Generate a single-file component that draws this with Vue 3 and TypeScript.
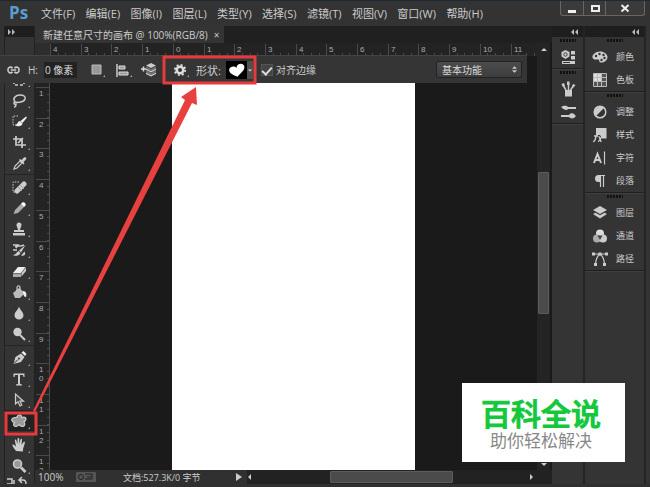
<script setup lang="ts">
import { ref } from 'vue'

interface Item { name: string; icon: string }

const menus: string[] = ['文件(F)', '编辑(E)', '图像(I)', '图层(L)', '类型(Y)', '选择(S)', '滤镜(T)', '视图(V)', '窗口(W)', '帮助(H)']

const height = ref('0 像素')
const snapEdges = ref(true)
const workspace = ref('基本功能')
const activeTool = ref('自定形状工具')

const toolGroups: Item[][] = [
  [
    { name: '选框工具', icon: '<path d="M3 5h10v9H3z" fill="none" stroke="currentColor" stroke-width="1.6" stroke-dasharray="3 2"/>' },
    { name: '套索工具', icon: '<path d="M4 10C1 6 5 3 9 3c4 0 6 2 5 4-1 3-7 4-10 3 -2 1-1 3 1 2 0 2-1 3-2 3" fill="none" stroke="currentColor" stroke-width="1.5"/>' },
    { name: '快速选择工具', icon: '<path d="M7 3H2v9h5" fill="none" stroke="currentColor" stroke-width="1" stroke-dasharray="1.5 1.2"/><path d="M15 3.500 9.500 8l2 2L16 4.500zM9 8c-2.500 0-2 3.500-5 4 3 2.500 7.500 1 7.500-1.500z" fill="#eee"/>' },
    { name: '裁剪工具', icon: '<path d="M5 2v9h10M2 5h9v9M7 9l5-5" fill="none" stroke="currentColor" stroke-width="1.7"/>' },
    { name: '吸管工具', icon: '<path d="M3 14l1-3 5-5 2 2-5 5z" fill="none" stroke="currentColor" stroke-width="1.2"/><path d="M8 5l1-1 1.500 1L13 2.500c2-1 3 1 2 2L12.500 7l1 1.500-1 1z" fill="currentColor"/>' },
  ],
  [
    { name: '修复画笔工具', icon: '<path d="M8 3H2v10h4" fill="none" stroke="currentColor" stroke-width="1" stroke-dasharray="1.500 1.200"/><path d="M6 12l7-7" stroke="currentColor" stroke-width="5" stroke-linecap="round"/><path d="M7 8l4 4M9 6l4 4" stroke="#999" stroke-width="1"/>' },
    { name: '画笔工具', icon: '<path d="M2.500 14l1.500-4 6-6 3 3-6 6z" fill="#aaa"/><path d="M10 4c1-2 3-2 4-1s1 3-1 4z" fill="#fff"/>' },
    { name: '仿制图章工具', icon: '<path d="M2 12h12v2.500H2zM3 9h4C7 7 5.500 6 5.500 4a2.500 2.500 0 0 1 5 0c0 2-1.500 3-1.500 5h4v2H3z" fill="currentColor"/>' },
    { name: '历史记录画笔工具', icon: '<path d="M2 3h5l-2 3M4 5c3-2 5 0 9-2M2 8h4" fill="none" stroke="currentColor" stroke-width="1.400"/><path d="M14.500 3 8 8.500l2 2zM7.500 9c-2 1-2 3.500-5.500 4 3 2 7 0 7.500-2zM10 13.500c4 1 5-1.500 3.500-4z" fill="currentColor"/>' },
    { name: '橡皮擦工具', icon: '<path d="M2 10l5-6h7.500l-4.500 6z" fill="#eee"/><path d="M2 10.500h8V14H2z" fill="#aaa"/><path d="M10.500 10 15 4.500V8l-4.500 5.500z" fill="#ccc"/>' },
    { name: '油漆桶工具', icon: '<path d="M2 9l6-5 6 5-5 5H4z" fill="#bbb"/><path d="M6 8V4c0-3 3-3 3 0v3" fill="none" stroke="currentColor" stroke-width="1.200"/><path d="M12 7c3 0 4 3 3 6-2 0-3-2-3-6z" fill="#eee"/>' },
    { name: '模糊工具', icon: '<path d="M8 1.500C7 5 3.500 7 3.500 10.500a4.500 4 0 0 0 9 0C12.500 7 9 5 8 1.500z" fill="currentColor"/>' },
    { name: '减淡工具', icon: '<circle cx="6.500" cy="6" r="4.200" fill="currentColor"/><path d="M9 9l5 5" stroke="currentColor" stroke-width="2"/>' },
  ],
  [
    { name: '钢笔工具', icon: '<path d="M2.500 14 4.500 7 10 3.500l3.500 3.500L10 12z" fill="currentColor"/><path d="M10.500 2.500l2-1.500L15.500 4 14 6z" fill="#eee"/><path d="M3 13.500l4-4" stroke="#333" stroke-width="1"/><circle cx="8" cy="8.500" r="1" fill="#333"/>' },
    { name: '横排文字工具', icon: '<path d="M2.500 2.500h11v3.500h-1l-.5-2H9v9l2 .5v1H5v-1l2-.5v-9H4L3.500 6h-1z" fill="currentColor"/>' },
    { name: '路径选择工具', icon: '<path d="M4.500 2v10l2.500-2.200L9 14l1.800-1L9 9.200h3.500z" fill="#444" stroke="currentColor" stroke-width="1.200"/>' },
    { name: '自定形状工具', icon: '<path d="M6 4C7 1 11 1 10.500 4.500c3-1 4.500 0 4.500 1.500 0 1.500-1.500 2.500-2 3 1.500 2 .5 4.500-1.500 4.500S8.500 12 8 11.500c-1 1.500-3 2.500-4.500 1.500S2.500 10.500 3.500 9.500C.5 9 0 6 2 5s3 0 4-1z" fill="#999" stroke="currentColor" stroke-width="1.200"/>' },
  ],
  [
    { name: '抓手工具', icon: '<path d="M5 14C3 11 1 9 1.500 7.500 3 7 4 9 5 9.500L3.800 3.500C4 2 5.300 2.500 5.500 4L6.500 7V2c.5-1.500 1.800-1 1.800 0v5L9.500 2.500c.5-1.200 1.800-.7 1.500.5L10.500 8 12.500 5c1-.8 2 0 1.300 1.200L12 12v2.500z" fill="currentColor"/>' },
    { name: '缩放工具', icon: '<circle cx="6.500" cy="6" r="4" fill="#999" stroke="currentColor" stroke-width="1.600"/><path d="M10 9.500l4.500 4.500" stroke="currentColor" stroke-width="2.600"/>' },
  ],
]

const iconDock: Item[][] = [
  [{ name: '历史记录', icon: '<path d="M5.500 1l4 2v4.500l-4 2.500-4-2.500V3z" fill="currentColor"/><circle cx="5.500" cy="5.500" r="1.700" fill="none" stroke="#444"/><path d="M11 2h4v3.500h-4zM11 7h4v3.500h-4zM2 12h13v3H2z" fill="currentColor"/><path d="M3 13.500h7" stroke="#333"/>' }],
  [
    { name: '画笔预设', icon: '<path d="M5 9h7v6.500H5z" fill="currentColor"/><path d="M6 9 3 4M8.500 9V2M10.500 9 14 4" stroke="currentColor" stroke-width="1.500"/><path d="M1.500 3 4 2l1 3-2 1zM7 .500h2.500V4H7zM13 3l2.500 1-2 2.500-1.500-1z" fill="currentColor"/>' },
    { name: '画笔', icon: '<path d="M1 3c3-2 6-1.500 7 0h8v2H8C7 7 4 6 1 3zM1 11h8c1-2 4-2.500 5.500-.5L16 12l-1.500 1.500C13 15 10 14.500 9 13H1z" fill="currentColor"/>' },
  ],
]

const panelDock: Item[][] = [
  [
    { name: '颜色', icon: '<path d="M8 2.500c4 0 7.500 2.500 7.500 5.500s-3 6-7 5.500c-2-.3-.5-2.500-2-3S1 11.500.500 8.500 4 2.500 8 2.500z" fill="currentColor"/><g fill="#333"><circle cx="4" cy="7" r="1.200"/><circle cx="7.500" cy="5" r="1.200"/><circle cx="11.500" cy="6" r="1.200"/><circle cx="12.500" cy="9" r="1.200"/><circle cx="9.500" cy="11" r="1.200"/></g>' },
    { name: '色板', icon: '<path d="M1.500 1.500h13v13h-13z" fill="#555"/><path d="M1.500 1.500h8v8h-8z" fill="#ddd"/><path d="M1.500 1.500h13v13h-13zM5.500 1.500v13M9.500 1.500v13M1.500 5.500h13M1.500 9.500h13" fill="none" stroke="#bbb"/>' },
  ],
  [
    { name: '调整', icon: '<circle cx="8" cy="8" r="5.800" fill="#333" stroke="currentColor" stroke-width="1.500"/><path d="M12.200 3.800A6 6 0 0 0 3.800 12.200z" fill="currentColor"/>' },
    { name: '样式', icon: '<path d="M4 1h10.500v10.500H10L8 8H4z" fill="currentColor"/><path d="M1 14.500c3 1 2.500-9 5.500-8M2 9h4M6.500 9.500c2 0 1 5 3 5M10.500 9.500c-2 0-2 5-4.500 5" fill="none" stroke="currentColor" stroke-width="1.400"/>' },
    { name: '字符', icon: '<path d="M2 13 5.500 4 9 13M3.300 10h4.400" fill="none" stroke="currentColor" stroke-width="2"/><path d="M12.500 1.500v13" stroke="currentColor" stroke-width="1.200"/>' },
    { name: '段落', icon: '<path d="M8 2H6.500a3.500 3.500 0 0 0 0 7H8z" fill="currentColor"/><path d="M7 2.500h6M8.500 2v12M11.500 2v12" fill="none" stroke="currentColor" stroke-width="1.200"/>' },
  ],
  [
    { name: '图层', icon: '<path d="M8 1l7 4-7 4-7-4zM1 9l2.500-1.300L8 10.300l4.500-2.600L15 9l-7 4.500z" fill="currentColor"/>' },
    { name: '通道', icon: '<circle cx="8" cy="5.500" r="4" fill="#ddd"/><circle cx="5" cy="10.500" r="4" fill="#aaa"/><circle cx="11" cy="10.500" r="4" fill="#ccc"/><path d="M5.500 7.500h5L8 12z" fill="#444"/>' },
    { name: '路径', icon: '<path d="M1 3h14M8 3C5 5 4 8 3.500 13M8 3c3 2 4 5 4.500 10" fill="none" stroke="currentColor" stroke-width="1.200"/><path d="M0 1.500h3v3H0zM6.500 1.500h3v3h-3zM13 1.500h3v3h-3zM2 12h3v3H2zM11 12h3v3h-3z" fill="currentColor"/>' },
  ],
]

/* One ruler unit is 30.7 pixels on screen at this zoom. */
const unit = 30.7
const across = Array.from({ length: 16 }, (_, i) => ({ pos: Math.round(i * unit), label: String(Math.abs(i - 4)) }))
const acrossMinor = Array.from({ length: 64 }, (_, i) => Math.round(i * unit / 4))
const down = Array.from({ length: 13 }, (_, i) => ({ pos: Math.round(31 + i * unit), digits: String(i + 1).split('') }))
const downMinor = Array.from({ length: 56 }, (_, i) => Math.round(i * unit / 4))
</script>

<template>
  <div class="window">
    <header class="menubar">
      <span class="logo">Ps</span>
      <nav class="menus">
        <button v-for="m in menus" :key="m" type="button">{{ m }}</button>
      </nav>
      <div class="controls">
        <button type="button" aria-label="最小化"><svg viewBox="0 0 12 12"><path d="M2 8h8v3H2z" fill="#eee" /></svg></button>
        <button type="button" aria-label="最大化"><svg viewBox="0 0 12 12"><path d="M3 4h7v5H3z" fill="none" stroke="#eee" stroke-width="2" /></svg></button>
        <button type="button" class="close" aria-label="关闭"><svg viewBox="0 0 12 12"><path d="M2.500 3l7 6.500M9.500 3l-7 6.500" stroke="#eee" stroke-width="2" /></svg></button>
      </div>
    </header>

    <div class="workspace">
      <aside class="tools">
        <div class="strip left"><svg viewBox="0 0 8 6"><path d="M0 0l3 3-3 3zM4 0l3 3-3 3z" /></svg></div>
        <div class="grip"></div>
        <div class="toolset">
          <div v-for="(group, g) in toolGroups" :key="g" class="toolgroup">
            <button v-for="t in group" :key="t.name" type="button" class="tool" :class="{ active: t.name === activeTool }" :aria-label="t.name" @click="activeTool = t.name">
              <svg viewBox="0 0 16 16" v-html="t.icon"></svg>
            </button>
          </div>
          <svg class="swap" viewBox="0 0 24 12"><path d="M2 3h5v5H2M9 4v5M17 1l-3 3 3 3M14 4h4c2 0 3 2 3 4" fill="none" stroke="#ccc" stroke-width="1.500" /></svg>
        </div>
      </aside>

      <main class="document">
        <div class="tabs">
          <div class="tab">
            <span>新建任意尺寸的画布 @ 100%(RGB/8)</span>
            <button type="button" aria-label="关闭文档">×</button>
          </div>
        </div>
        <div class="stage">
          <div class="view">
            <div class="ruler-row">
              <div class="corner"></div>
              <svg class="ruler-x">
                <rect v-for="p in acrossMinor" :key="'m' + p" :x="p" y="10" width="1" height="3" class="tick" />
                <g v-for="a in across" :key="a.pos">
                  <rect :x="a.pos" y="1" width="1" height="12" class="tick" />
                  <text :x="a.pos + 3" y="9">{{ a.label }}</text>
                </g>
              </svg>
            </div>
            <div class="canvas-row">
              <svg class="ruler-y">
                <rect v-for="p in downMinor" :key="'m' + p" x="12" :y="p" width="3" height="1" class="tick" />
                <rect x="14" y="0" width="1" height="100%" class="tick" />
                <g v-for="d in down" :key="d.pos">
                  <rect x="1" :y="d.pos" width="14" height="1" class="tick" />
                  <text v-for="(c, i) in d.digits" :key="i" x="4" :y="d.pos + 9 + i * 9">{{ c }}</text>
                </g>
              </svg>
              <div class="pasteboard"><div class="artboard"></div></div>
            </div>
          </div>
          <div class="scroll-y">
            <svg viewBox="0 0 8 6"><path d="M1 4l3-3 3 3z" /></svg>
            <div class="track"><div class="thumb"></div></div>
            <svg viewBox="0 0 8 6"><path d="M1 1l3 3 3-3z" /></svg>
          </div>
        </div>
        <footer class="status">
          <span class="zoom">100%</span>
          <svg class="badge" viewBox="0 0 20 10"><rect width="20" height="10" rx="1" fill="#555" /><circle cx="5" cy="5" r="2.500" fill="none" stroke="#222" /><path d="M9 2h7v5H9M11 5h4" fill="none" stroke="#222" /></svg>
          <span class="size">文档:527.3K/0 字节</span>
          <svg class="more" viewBox="0 0 8 8"><path d="M1 0l6 4-6 4z" /></svg>
          <div class="scroll-x">
            <svg viewBox="0 0 6 8"><path d="M4 1L1 4l3 3z" /></svg>
            <div class="track"><div class="thumb"></div></div>
            <svg viewBox="0 0 6 8"><path d="M2 1l3 3-3 3z" /></svg>
          </div>
        </footer>
      </main>

      <aside class="dock narrow">
        <div class="strip"><svg viewBox="0 0 8 6"><path d="M3 0L0 3l3 3zM7 0L4 3l3 3z" /></svg></div>
        <section v-for="(group, g) in iconDock" :key="g">
          <div class="grip"></div>
          <button v-for="p in group" :key="p.name" type="button" class="panel" :aria-label="p.name"><svg viewBox="0 0 16 16" v-html="p.icon"></svg></button>
        </section>
      </aside>
      <aside class="dock wide">
        <div class="strip"><svg viewBox="0 0 8 6"><path d="M3 0L0 3l3 3zM7 0L4 3l3 3z" /></svg></div>
        <section v-for="(group, g) in panelDock" :key="g">
          <div class="grip"></div>
          <button v-for="p in group" :key="p.name" type="button" class="panel"><svg viewBox="0 0 16 16" v-html="p.icon"></svg><span>{{ p.name }}</span></button>
        </section>
      </aside>
    </div>

    <div class="options">
      <svg class="link" viewBox="0 0 14 10"><path d="M6 3C4 1 1 2 1 5s3 4 5 2M8 3c2-2 5-1 5 2s-3 4-5 2M4 5h6" fill="none" stroke="#ccc" stroke-width="1.700" /></svg>
      <label class="height" for="shape-height">H:</label>
      <input id="shape-height" v-model="height" type="text" class="field">
      <button type="button" class="opt" aria-label="路径操作"><svg viewBox="0 0 18 16"><path d="M3 3h9v9H3z" fill="#999" stroke="#bbb" /><path d="M16 13v2h-2z" fill="#aaa" /></svg></button>
      <button type="button" class="opt" aria-label="路径对齐方式"><svg viewBox="0 0 18 16"><path d="M2 2v13" stroke="#ccc" stroke-width="1.500" /><path d="M4 4h6v3H4zM4 10h9v3H4z" fill="#999" stroke="#ddd" /><path d="M17 13v2h-2z" fill="#aaa" /></svg></button>
      <button type="button" class="opt" aria-label="路径排列方式"><svg viewBox="0 0 18 16"><path d="M0 7h5M2.500 4.500v5" stroke="#ddd" stroke-width="1.500" /><path d="M10 1l5 2.500L10 6 5 3.500zM5 6.500L10 9l5-2.500V8l-5 2.500L5 8zM5 10.500l5 2.500 5-2.500V12l-5 2.500L5 12z" fill="#ccc" /><path d="M5 4.500L10 7l5-2.500v2L10 9 5 6.500zM5 8.500l5 2.500 5-2.500v2L10 13l-5-2.500z" fill="#777" /></svg></button>
      <button type="button" class="opt gear" aria-label="设置"><svg viewBox="0 0 18 16"><circle cx="7" cy="8" r="3.300" fill="none" stroke="#ddd" stroke-width="2.600" /><circle cx="7" cy="8" r="5.200" fill="none" stroke="#ddd" stroke-width="1.800" stroke-dasharray="2 2.080" /><path d="M16 13v2h-2z" fill="#aaa" /></svg></button>
      <span class="shape-label">形状:</span>
      <button type="button" class="picker" aria-label="形状">
        <svg class="heart" viewBox="0 0 20 17"><path d="M11 15C7 13 3 12 3 8.500 3 5 8 4 10 6.500 10 2 17 1 17.500 5.500 18 9 14 11 11 15z" fill="#fff" /></svg>
        <svg class="caret" viewBox="0 0 6 17"><path d="M1 8h4L3 10z" fill="#ddd" /></svg>
      </button>
      <input id="snap-edges" v-model="snapEdges" type="checkbox" class="check">
      <label for="snap-edges" class="snap">对齐边缘</label>
      <div class="preset">
        <select v-model="workspace" aria-label="工作区"><option>基本功能</option></select>
        <svg viewBox="0 0 6 10"><path d="M0 4l3-3 3 3zM0 6l3 3 3-3z" fill="#ccc" /></svg>
      </div>
    </div>

    <svg class="callout" viewBox="0 0 650 487" fill="none">
      <path d="M33 411L185 100l-4-3 15-10 1 18-5-2L35 412z" fill="#e8403f" />
      <rect x="6" y="413" width="30" height="21" stroke="#e63a3c" stroke-width="3" />
      <rect x="164" y="57" width="91" height="26" stroke="#e63a3c" stroke-width="3" />
    </svg>

    <div class="brand">
      <strong>百科全说</strong>
      <span>助你轻松解决</span>
    </div>
  </div>
</template>

<style>
body { margin: 0; background: #2b2b2b; }
</style>

<style scoped>
* { box-sizing: border-box; }
.window {
  position: relative;
  display: flex;
  flex-direction: column;
  height: 100vh;
  overflow: hidden;
  background: #333;
  border-top: 1px solid #1d2a33;
  color: #ccc;
  font-family: "Open Sans", "Noto Sans CJK SC", sans-serif;
  font-size: 10px;
}
button { margin: 0; padding: 0; border: 0; background: none; color: inherit; font: inherit; }
svg { display: block; flex: none; }

.menubar { display: flex; height: 25px; flex: none; padding: 0 5px 0 9px; }
.logo { width: 32px; color: #5a9bd0; font: bold 17px/23px "Open Sans", sans-serif; }
.menus { display: flex; flex: 0 1 442px; justify-content: space-between; font-size: 11px; white-space: nowrap; }
.menus button { line-height: 24px; }
.controls { display: flex; height: 15px; margin-left: auto; border: 1px solid #666; border-top: 0; border-radius: 0 0 3px 3px; background: #3b3b3b; }
.controls button { display: flex; align-items: center; justify-content: center; width: 22px; }
.controls button + button { border-left: 1px solid #666; }
.controls .close { width: 39px; }
.controls svg { width: 12px; height: 12px; }

.workspace { display: flex; flex: 1; min-height: 0; padding: 0 4px; border-bottom: 3px solid #303030; }
.strip { display: flex; align-items: center; justify-content: flex-end; height: 11px; flex: none; padding: 0 4px; background: #1e1e1e; }
.strip.left { justify-content: flex-start; padding: 0 3px; }
.strip svg { width: 8px; height: 6px; fill: #bbb; }
.grip { width: 16px; height: 3px; margin: 2px auto 3px; background: repeating-linear-gradient(90deg, #111 0 2px, #333 2px 3px); }

.tools { display: flex; flex-direction: column; width: 31px; flex: none; overflow: hidden; border: solid #222; border-width: 0 1px; background: #343434; }
.toolset { padding-top: 26px; }
.toolgroup + .toolgroup { margin-top: 1px; padding-top: 1px; border-top: 1px solid #252525; }
.tool { position: relative; display: flex; align-items: center; justify-content: center; width: 100%; height: 21px; padding-right: 2px; color: #ccc; }
.tool svg { width: 16px; height: 16px; }
.tool::after { content: ""; position: absolute; right: 4px; bottom: 2px; border: solid transparent; border-width: 2px 0 0 2px; border-bottom: 2px solid #999; }
.tool.active { background: #222; }
.swap { width: 24px; height: 12px; }

.document { display: flex; flex: 1; flex-direction: column; min-width: 0; background: #1a1a1a; }
.tabs { display: flex; height: 17px; flex: none; background: #202020; }
.tab { display: flex; align-items: center; gap: 6px; padding: 0 5px 0 8px; background: #343434; white-space: nowrap; line-height: 16px; }
.tab button { font-size: 10px; }
.stage { display: flex; flex: 1; min-height: 0; }
.view { display: flex; flex: 1; flex-direction: column; min-width: 0; }
.ruler-row { display: flex; height: 13px; flex: none; background: #232323; }
.corner { width: 15px; flex: none; background: #2d2d2d; }
.ruler-x { flex: 1; min-width: 0; height: 13px; }
.ruler-x text, .ruler-y text { fill: #aaa; font: 8px "Liberation Sans", sans-serif; }
.tick { fill: #4a4a4a; }
.canvas-row { display: flex; flex: 1; min-height: 0; }
.ruler-y { width: 15px; height: 100%; background: #232323; }
.pasteboard { display: flex; justify-content: center; flex: 1; }
.artboard { width: 50%; background: #fff; }
.scroll-y { display: flex; flex-direction: column; align-items: center; width: 15px; flex: none; padding: 4px 0 2px; border-right: 2px solid #1a1a1a; background: #242424; }
.scroll-y > svg { width: 8px; height: 6px; fill: #ccc; }
.scroll-y .track { display: flex; flex: 1; flex-direction: column; width: 11px; }
.scroll-y .track::before { content: ""; flex: 119; }
.scroll-y .thumb { flex: 140; border: 1px solid #5c5c5c; border-radius: 1px; background: #4b4b4b; }
.scroll-y .track::after { content: ""; flex: 148; }

.status { display: flex; align-items: center; height: 14px; flex: none; background: #303030; font-size: 9px; line-height: 13px; white-space: nowrap; }
.zoom { width: 38px; padding-left: 3px; font-size: 10px; }
.badge { width: 20px; height: 10px; margin: 0 27px 0 3px; }
.size { width: 112px; }
.more { width: 8px; height: 8px; margin-right: 4px; fill: #ccc; }
.scroll-x { display: flex; align-items: center; flex: 1; height: 14px; padding-right: 18px; background: #222; }
.scroll-x > svg { width: 6px; height: 8px; fill: #ccc; }
.scroll-x .track { display: flex; flex: 1; height: 12px; }
.scroll-x .track::before { content: ""; flex: 77; }
.scroll-x .thumb { flex: 120; border: 1px solid #5c5c5c; border-radius: 1px; background: #4b4b4b; }
.scroll-x .track::after { content: ""; flex: 75; }

.dock { flex: none; background: #343434; border-right: 2px solid #242424; }
.dock section { border-bottom: 1px solid #1f1f1f; box-shadow: 0 1px #3f3f3f; }
.panel { display: flex; align-items: center; width: 100%; height: 23px; color: #ccc; font-size: 9px; }
.panel svg { width: 16px; height: 16px; }
.narrow { width: 33px; }
.narrow .panel { justify-content: center; }
.wide { width: 61px; }
.wide .panel { gap: 8px; padding-left: 7px; }

.options { position: absolute; top: 54px; left: 0; right: 123px; display: flex; align-items: center; height: 28px; padding: 0 5px 0 7px; border-top: 1px solid #444; background: #353535; }
.link { width: 13px; height: 10px; }
.height { margin: 0 6px 0 8px; }
.field { width: 33px; height: 16px; margin-right: 12px; padding: 0 1px; border: 0; background: #222; color: #ddd; font: inherit; }
.opt { width: 18px; margin-right: 8px; }
.opt svg { width: 18px; height: 16px; }
.opt.gear { margin: 0 5px 0 6px; }
.shape-label { width: 30px; font-size: 11px; white-space: nowrap; }
.picker { display: flex; width: 27px; margin-right: 8px; }
.heart { width: 21px; height: 18px; background: #000; }
.caret { width: 6px; height: 18px; background: #505050; }
.check { display: grid; place-items: center; appearance: none; width: 12px; height: 12px; margin: 0 3px 0 0; border: 1px solid #555; background: #444; }
.check:checked::after { content: ""; width: 4px; height: 8px; border: solid #ddd; border-width: 0 2px 2px 0; transform: rotate(42deg); }
.snap { white-space: nowrap; }
.preset { display: flex; align-items: center; width: 86px; height: 17px; margin-left: auto; padding-right: 4px; border: 1px solid #222; border-radius: 2px; background: linear-gradient(#4c4c4c, #3d3d3d); }
.preset select { flex: 1; min-width: 0; height: 15px; padding: 0 5px; border: 0; appearance: none; background: none; color: #ddd; font: inherit; }
.preset svg { width: 5px; height: 9px; }

.callout { position: absolute; top: -1px; left: 0; width: 650px; height: 487px; pointer-events: none; }
.brand { position: absolute; right: 25px; bottom: 25px; padding: 11px 24px 13px 19px; background: #fff; text-align: center; white-space: nowrap; font-family: "Noto Sans CJK SC", sans-serif; }
.brand strong { display: block; color: #14c83c; -webkit-text-stroke: 1px #14c83c; font-size: 30px; font-weight: 500; line-height: 36px; }
.brand span { display: block; color: #888; font-size: 17px; line-height: 19px; }
</style>
